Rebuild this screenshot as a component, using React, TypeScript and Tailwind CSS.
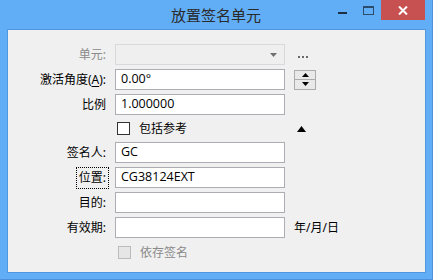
import React from "react";

const font = { fontFamily: '"Noto Sans", "Noto Sans CJK SC", sans-serif' };

function Label({ children, disabled }: { children: React.ReactNode; disabled?: boolean }) {
  return (
    <div className={`flex h-full items-center justify-end whitespace-nowrap text-[12px] ${disabled ? "text-[#8a8a8a]" : "text-[#000]"}`}>
      {children}
    </div>
  );
}

function Input({ value }: { value?: string }) {
  return (
    <div className="flex h-[21px] w-[170px] items-center border border-[#abadb3] bg-white pl-[5px] font-['Open_Sans','Noto_Sans',sans-serif] text-[12.5px] text-black">
      {value}
    </div>
  );
}

function CheckBox({ disabled }: { disabled?: boolean }) {
  return (
    <div
      className={`h-[13px] w-[13px] border ${disabled ? "border-[#bcbcbc] bg-[#e6e6e6]" : "border-[#333333] bg-white"}`}
    />
  );
}

export default function App() {
  return (
    <div
      className="flex h-[280px] w-[433px] flex-col border-r border-b border-[#4b92d8] bg-[#62aef6]"
      style={font}
    >
      {/* title bar */}
      <div className="grid h-[29px] shrink-0 grid-cols-[1fr_auto_1fr]">
        <div />
        <div className="pt-[3px] text-[15px] leading-[24px] text-[#2a2a2a]">放置签名单元</div>
        <div className="flex items-start justify-end pr-[7px]">
          <div className="flex h-[20px] w-[26px] items-center justify-center">
            <div className="mt-[6px] h-[2px] w-[9px] bg-[#1b2e44]" />
          </div>
          <div className="flex h-[20px] w-[26px] items-center justify-center">
            <div className="mt-[1px] h-[9px] w-[11px] border border-[#2a4b6b] border-t-2" />
          </div>
          <div className="flex h-[20px] w-[44px] items-center justify-center bg-[#c75050]">
            <svg width="10" height="9" viewBox="0 0 10 9">
              <path d="M1 0.5 L9 8.5 M9 0.5 L1 8.5" stroke="white" strokeWidth="2" />
            </svg>
          </div>
        </div>
      </div>

      {/* client */}
      <div className="ml-[7px] h-[244px] w-[419px] border border-[#4f98e0] bg-[#f0f0f0] pt-[14px]">
        <div className="grid grid-cols-[98px_170px_1fr] gap-x-[9px] gap-y-[4px] [grid-template-rows:21px_21px_21px_19px_21px_21px_21px_21px_21px]">
          {/* row 1 */}
          <Label disabled>单元:</Label>
          <div className="flex h-[21px] w-[170px] items-center justify-end border border-[#d9d9d9] bg-[#efefef] pr-[7px]">
            <svg width="7" height="4" viewBox="0 0 7 4">
              <path d="M0 0 H7 L3.5 4 Z" fill="#707070" />
            </svg>
          </div>
          <div className="flex items-center pl-[4px] pt-[4px]">
            <div className="flex gap-[2px]">
              <div className="h-[2px] w-[2px] bg-[#6a6a6a]" />
              <div className="h-[2px] w-[2px] bg-[#6a6a6a]" />
              <div className="h-[2px] w-[2px] bg-[#6a6a6a]" />
            </div>
          </div>

          {/* row 2 */}
          <Label>
            激活角度(<span className="underline underline-offset-2">A</span>):
          </Label>
          <Input value="0.00°" />
          <div className="flex items-center">
            <div className="flex h-[20px] w-[22px] flex-col border border-[#acacac] bg-[#e9e9e9]">
              <div className="flex flex-1 items-center justify-center border-b border-[#acacac]">
                <svg width="7" height="4" viewBox="0 0 7 4">
                  <path d="M3.5 0 L7 4 H0 Z" fill="#000" />
                </svg>
              </div>
              <div className="flex flex-1 items-center justify-center">
                <svg width="7" height="4" viewBox="0 0 7 4">
                  <path d="M0 0 H7 L3.5 4 Z" fill="#000" />
                </svg>
              </div>
            </div>
          </div>

          {/* row 3 */}
          <Label>比例</Label>
          <Input value="1.000000" />
          <div />

          {/* row 4 checkbox */}
          <div />
          <div className="flex items-center gap-[9px] pl-[2px] text-[12px]">
            <CheckBox />
            <span>包括参考</span>
          </div>
          <div className="flex items-center pl-[3px]">
            <svg width="9" height="6" viewBox="0 0 9 6">
              <path d="M4.5 0 L9 6 H0 Z" fill="#000" />
            </svg>
          </div>

          {/* row 5 */}
          <Label>签名人:</Label>
          <Input value="GC" />
          <div />

          {/* row 6 */}
          <Label>
            <span className="-mr-[3px] border border-dotted border-black px-[2px] leading-[20px]">位置:</span>
          </Label>
          <Input value="CG38124EXT" />
          <div />

          {/* row 7 */}
          <Label>目的:</Label>
          <Input />
          <div />

          {/* row 8 */}
          <Label>有效期:</Label>
          <Input />
          <div className="flex items-center text-[12px]">年/月/日</div>

          {/* row 9 */}
          <div />
          <div className="flex items-center gap-[9px] pl-[3px] text-[12px] text-[#8a8a8a]">
            <CheckBox disabled />
            <span>依存签名</span>
          </div>
          <div />
        </div>
      </div>
    </div>
  );
}
